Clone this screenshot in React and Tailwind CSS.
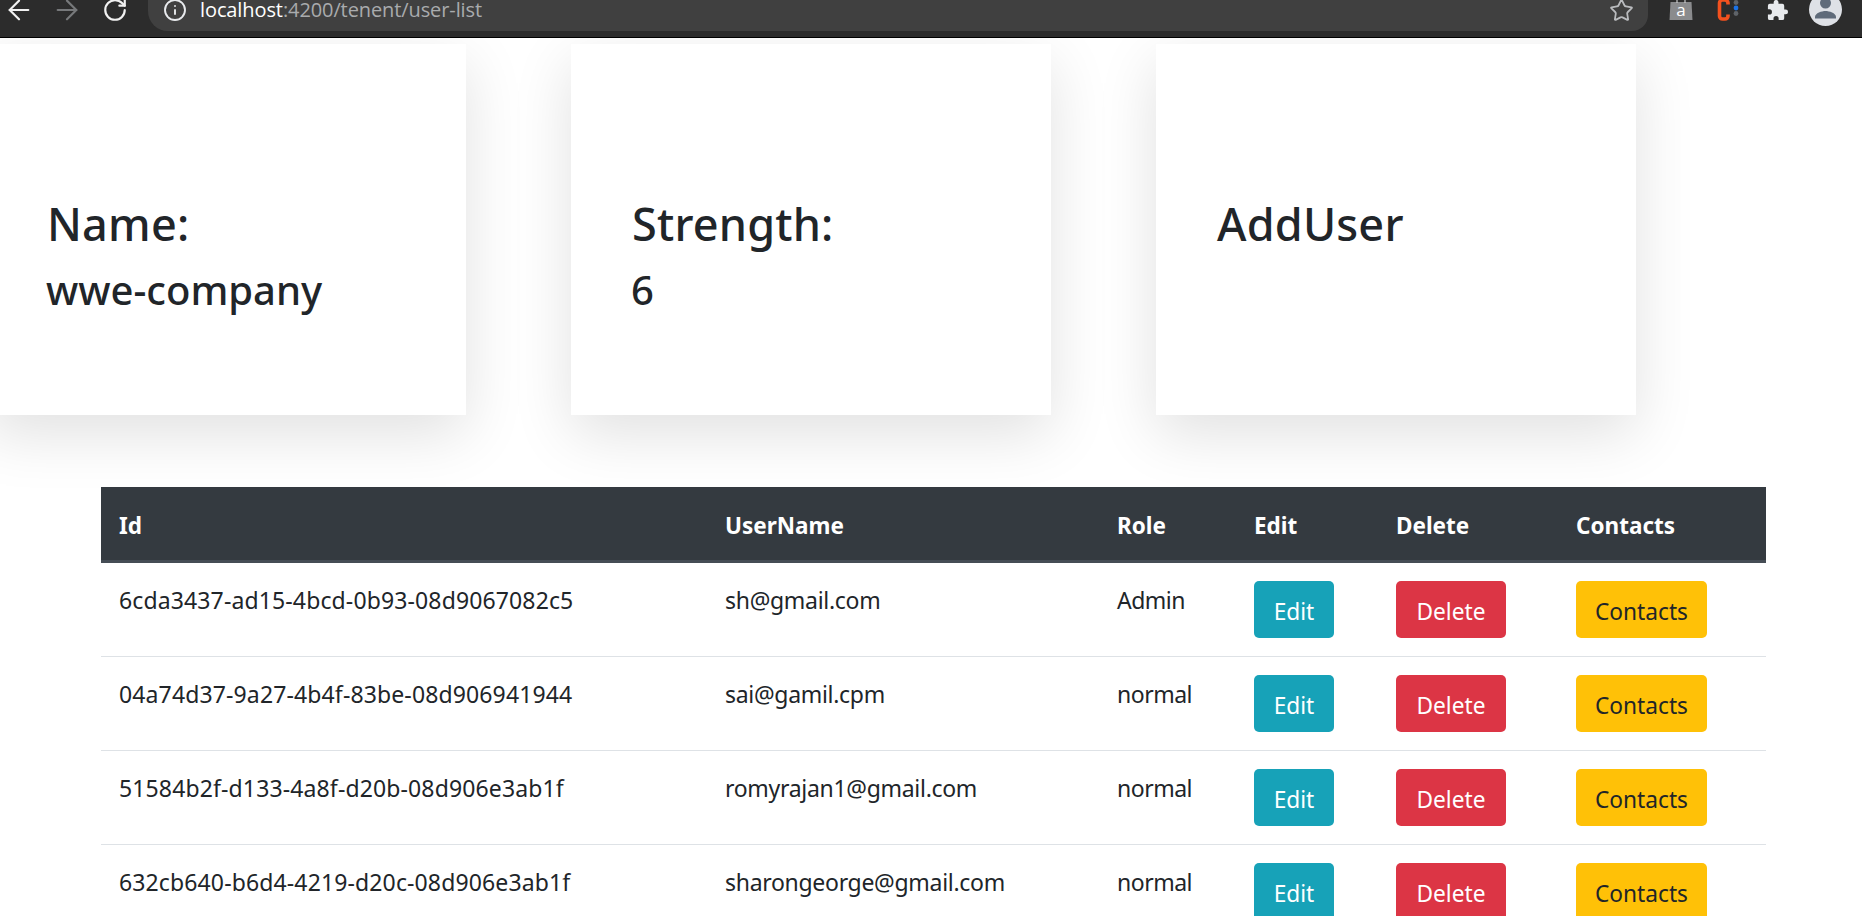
import React from "react";
import { ArrowLeft, ArrowRight, RotateCw, Info, Star } from "lucide-react";

const rows = [
  ["6cda3437-ad15-4bcd-0b93-08d9067082c5", "sh@gmail.com", "Admin"],
  ["04a74d37-9a27-4b4f-83be-08d906941944", "sai@gamil.cpm", "normal"],
  ["51584b2f-d133-4a8f-d20b-08d906e3ab1f", "romyrajan1@gmail.com", "normal"],
  ["632cb640-b6d4-4219-d20c-08d906e3ab1f", "sharongeorge@gmail.com", "normal"],
];

function BrowserBar() {
  return (
    <div className="h-[38px] bg-[#2c2c2c] border-b border-black flex items-start overflow-hidden text-[#e8eaed] relative z-10">
      <div className="w-[148px] h-[20px] flex items-center shrink-0 -ml-[5px] mr-[5px]">
        <div className="w-[48px] flex justify-center"><ArrowLeft size={32} strokeWidth={1.6} className="text-[#f1f1f1] shrink-0" /></div>
        <div className="w-[48px] flex justify-center"><ArrowRight size={32} strokeWidth={1.6} className="text-[#77797b] shrink-0" /></div>
        <div className="w-[48px] flex justify-center"><RotateCw size={26} strokeWidth={2} className="text-[#f1f1f1] shrink-0" /></div>
      </div>
      <div className="w-[1500px] h-[31px] bg-[#404040] rounded-br-[16px] rounded-bl-[20px] flex items-start pl-[15px] pr-[14px] shrink-0">
        <div className="h-[20px] flex items-center"><Info size={24} strokeWidth={1.9} className="text-[#e8eaed]" /></div>
        <div className="ml-[13px] h-[20px] flex items-center text-[20px] leading-[20px] font-['Open_Sans',sans-serif] tracking-[-0.1px] whitespace-nowrap">
          <span className="text-white">localhost</span>
          <span className="text-[#a9abad]">:4200/tenent/user-list</span>
        </div>
        <div className="ml-auto h-[20px] flex items-center"><Star size={25} strokeWidth={1.7} className="text-[#b9bbbe]" /></div>
      </div>
      <div className="flex-1 h-[20px] flex items-center pl-[21px]">
        <svg width="24" height="24" viewBox="0 0 24 24" className="shrink-0">
          <path d="M1.500 4h21l1 18H.5z" fill="#8a8b8d" />
          <path d="M8 5V1M16 5V1" stroke="#c9cacb" strokeWidth="1.2" />
          <text x="12" y="18" textAnchor="middle" fontSize="17" fill="#fff" fontFamily="'Open Sans',sans-serif">a</text>
        </svg>
        <svg width="24" height="24" viewBox="0 0 24 24" className="ml-[22px] shrink-0">
          <path d="M13 6.500V5a3 3 0 0 0-3-3H7.500a3 3 0 0 0-3 3v13a3 3 0 0 0 3 3H10a3 3 0 0 0 3-3v-1.500" fill="none" stroke="#f4511e" strokeWidth="3.6" />
          <circle cx="21" cy="4.500" r="2.400" fill="#5f6368" />
          <circle cx="21" cy="10" r="2.400" fill="#1a73e8" />
          <circle cx="21" cy="15.500" r="2.400" fill="#5f6368" />
        </svg>
        <svg width="23" height="23" viewBox="0 0 24 24" className="ml-[27px] shrink-0">
          <path d="M20.500 11H19V7a2 2 0 0 0-2-2h-4V3.500a2.500 2.500 0 0 0-5 0V5H4a2 2 0 0 0-2 2v3.800h1.500a2.700 2.700 0 0 1 0 5.400H2V20a2 2 0 0 0 2 2h3.800v-1.500a2.700 2.700 0 0 1 5.400 0V22H17a2 2 0 0 0 2-2v-4h1.500a2.500 2.500 0 0 0 0-5z" fill="#e8eaed" />
        </svg>
        <svg width="33" height="33" viewBox="0 0 33 33" className="ml-[20px] -mt-[2px] shrink-0">
          <circle cx="16.500" cy="16.500" r="16.500" fill="#dee1e6" />
          <circle cx="16.500" cy="10" r="5.500" fill="#5f6b7a" />
          <path d="M6 24c0-4 7-6 10.500-6s10.500 2 10.500 6v1.500H6z" fill="#5f6b7a" />
        </svg>
      </div>
    </div>
  );
}

function Card({ title, sub }) {
  return (
    <div className="w-[480px] h-[371px] bg-white shadow-[0_19px_57px_rgba(0,0,0,0.12)] pt-[155px] pl-[61px] text-[#212529] shrink-0">
      <div className="text-[45px] leading-[50px] font-medium tracking-[0.2px]">{title}</div>
      {sub && <div className="text-[40px] leading-[48px] mt-[17px] -ml-[1px] font-medium">{sub}</div>}
    </div>
  );
}

function Btn({ children, className = "" }) {
  return (
    <div className={`inline-flex items-center justify-center h-[57px] pt-[6px] rounded-[5px] text-[22.7px] ${className}`}>
      {children}
    </div>
  );
}

export default function App() {
  return (
    <div className="w-[1862px] h-[916px] overflow-hidden bg-white font-['Noto_Sans',sans-serif]">
      <BrowserBar />
      <div className="flex gap-[105px] -ml-[14px] mt-[6px]">
        <Card title="Name:" sub="wwe-company" />
        <Card title="Strength:" sub="6" />
        <Card title="AddUser" />
      </div>
      <table className="ml-[101px] mt-[72px] w-[1665px] table-fixed border-collapse text-[23px] text-[#212529]">
        <colgroup>
          <col className="w-[606px]" />
          <col className="w-[392px]" />
          <col className="w-[137px]" />
          <col className="w-[142px]" />
          <col className="w-[180px]" />
          <col className="w-[208px]" />
        </colgroup>
        <thead>
          <tr className="h-[74px] bg-[#343a40] text-white border-b-[3px] border-[#454d55]">
            {["Id", "UserName", "Role", "Edit", "Delete", "Contacts"].map((h) => (
              <th key={h} className="px-[18px] pt-[5px] text-left font-bold text-[22.5px] align-middle">{h}</th>
            ))}
          </tr>
        </thead>
        <tbody>
          {rows.map((r) => (
            <tr key={r[0]} className="border-b border-[#dee2e6] h-[94px]">
              <td className="px-[18px] py-[18px] align-top whitespace-nowrap leading-[38px] tracking-[0.13px]">{r[0]}</td>
              <td className="px-[18px] py-[18px] align-top whitespace-nowrap leading-[38px] tracking-[-0.3px]">{r[1]}</td>
              <td className="px-[18px] py-[18px] align-top whitespace-nowrap leading-[38px] tracking-[-0.5px]">{r[2]}</td>
              <td className="px-[18px] py-[18px] align-top">
                <Btn className="w-[80px] bg-[#17a2b8] text-white">Edit</Btn>
              </td>
              <td className="px-[18px] py-[18px] align-top">
                <Btn className="w-[110px] bg-[#dc3545] text-white">Delete</Btn>
              </td>
              <td className="px-[18px] py-[18px] align-top">
                <Btn className="w-[131px] bg-[#ffc107] text-[#212529]">Contacts</Btn>
              </td>
            </tr>
          ))}
        </tbody>
      </table>
    </div>
  );
}
